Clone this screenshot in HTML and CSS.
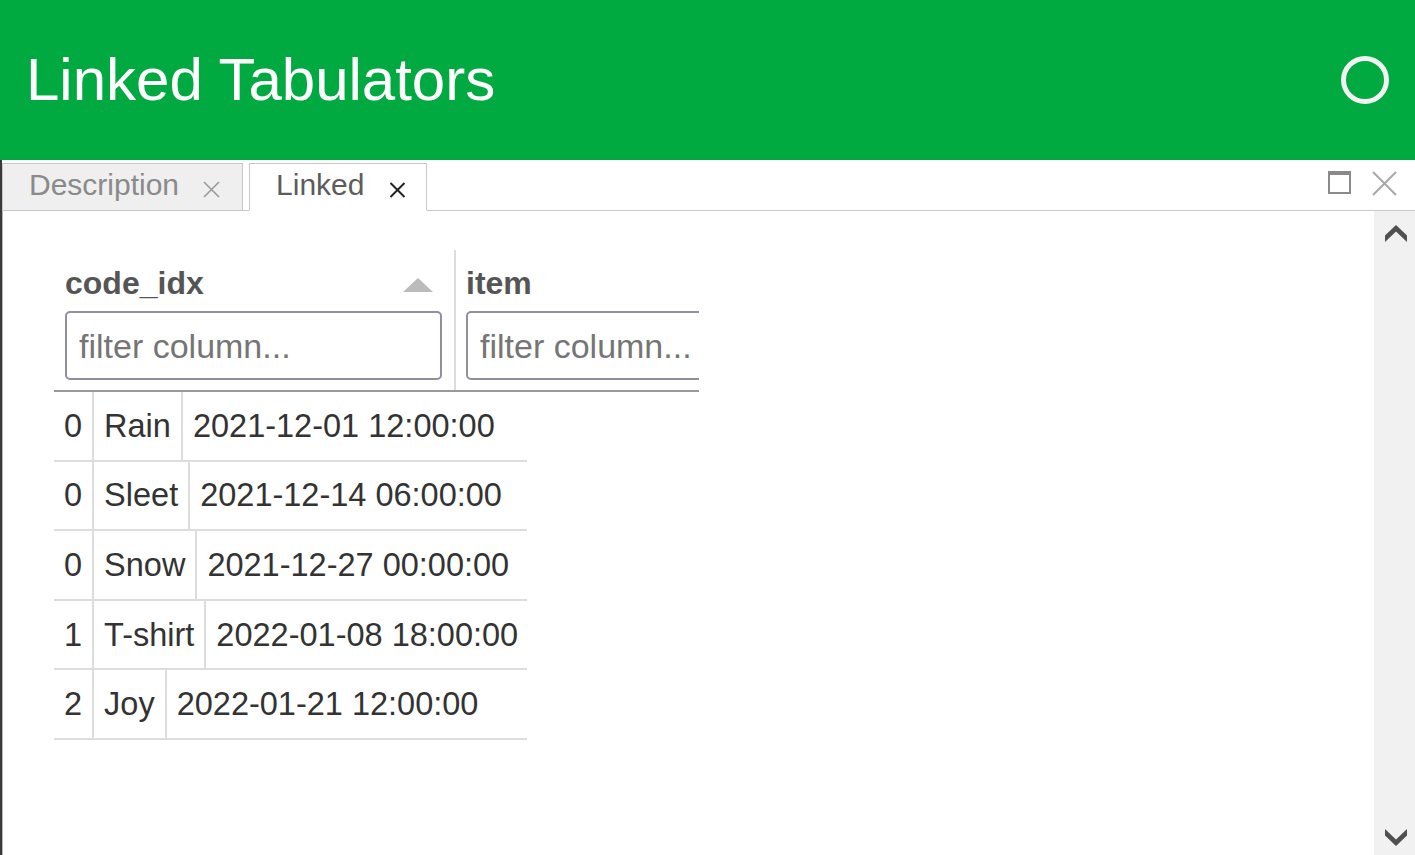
FILE: index.html
```html
<!DOCTYPE html>
<html lang="en">
<head>
<meta charset="utf-8">
<title>Linked Tabulators</title>
<link rel="stylesheet" href="styles.css">
</head>
<body>
<header class="topbar">
  <h1 class="title">Linked Tabulators</h1>
  <svg class="busy" width="50" height="50" viewBox="0 0 50 50"><circle cx="25" cy="25" r="21.5" fill="none" stroke="#f2f2f2" stroke-width="5"/></svg>
</header>
<div class="main">
  <div class="tabs-bar">
    <div class="tab">
      <span class="tab-label">Description</span>
      <svg class="tab-close" width="17" height="17" viewBox="0 0 17 17"><path d="M1 1L16 16M16 1L1 16" stroke="#9a9a9a" stroke-width="1.6"/></svg>
    </div>
    <div class="tab active">
      <span class="tab-label">Linked</span>
      <svg class="tab-close dark" width="17" height="16" viewBox="0 0 17 16"><path d="M1.5 1L15.5 15M15.5 1L1.5 15" stroke="#222" stroke-width="2"/></svg>
    </div>
    <div class="win-icons">
      <span class="maxi"></span>
      <svg class="win-close" width="25" height="25" viewBox="0 0 25 25"><path d="M1 1L24 24M24 1L1 24" stroke="#a8a8a8" stroke-width="2"/></svg>
    </div>
  </div>
  <div class="panel">
    <div class="content">
      <div class="table">
        <div class="thead">
          <div class="col first">
            <div class="col-title-row">
              <span class="col-title">code_idx</span>
              <span class="sort-arrow"></span>
            </div>
            <input class="filter" type="text" placeholder="filter column...">
          </div>
          <div class="col">
            <div class="col-title-row">
              <span class="col-title">item</span>
            </div>
            <input class="filter" type="text" placeholder="filter column...">
          </div>
        </div>
        <div class="tbody">
          <div class="row"><div class="cell">0</div><div class="cell">Rain</div><div class="cell last">2021-12-01 12:00:00</div></div>
          <div class="row"><div class="cell">0</div><div class="cell">Sleet</div><div class="cell last">2021-12-14 06:00:00</div></div>
          <div class="row"><div class="cell">0</div><div class="cell">Snow</div><div class="cell last">2021-12-27 00:00:00</div></div>
          <div class="row"><div class="cell">1</div><div class="cell">T-shirt</div><div class="cell last">2022-01-08 18:00:00</div></div>
          <div class="row"><div class="cell">2</div><div class="cell">Joy</div><div class="cell last">2022-01-21 12:00:00</div></div>
        </div>
      </div>
    </div>
    <div class="scrollbar">
      <svg width="22" height="17" viewBox="0 0 22 17"><polygon points="11,0 22,10.5 22,17 11,6.5 0,17 0,10.5" fill="#505050"/></svg>
      <svg width="22" height="17" viewBox="0 0 22 17"><polygon points="0,0 11,10.5 22,0 22,6.5 11,17 0,6.5" fill="#505050"/></svg>
    </div>
  </div>
</div>
</body>
</html>
```

FILE: styles.css
```css
* { box-sizing: border-box; }
html, body {
  margin: 0;
  padding: 0;
  width: 1415px;
  height: 855px;
  overflow: hidden;
  background: #fff;
  font-family: "Liberation Sans", Arial, sans-serif;
}
.topbar {
  height: 160px;
  background: #00aa41;
  display: flex;
  align-items: center;
  justify-content: space-between;
  padding: 0 25px 0 26px;
}
.title {
  margin: 0;
  color: #fff;
  font-weight: normal;
  font-size: 60px;
  line-height: 1;
}
.busy { display: block; }
.main {
  height: 695px;
  display: flex;
  flex-direction: column;
  border-left: 2px solid #3a3a3a;
}
.tabs-bar {
  height: 51px;
  display: flex;
  align-items: flex-end;
  border-bottom: 1px solid #c8c8c8;
  gap: 6px;
}
.tab {
  height: 48px;
  margin-bottom: -1px;
  display: flex;
  align-items: center;
  background: #efefef;
  border: 1px solid #c8c8c8;
  padding: 0 22px 5px 26px;
  font-size: 30px;
  color: #8a8a8a;
}
.tab.active {
  background: #fff;
  border-bottom-color: #fff;
  color: #5c5c5c;
  padding-right: 20px;
}
.tab-label { line-height: 1; }
.tab-close { margin-left: 24px; margin-top: 9px; display: block; }
.tab-close.dark { margin-left: 25px; margin-top: 11px; }
.win-icons {
  margin-left: auto;
  align-self: flex-start;
  margin-top: 11px;
  margin-right: 18px;
  display: flex;
  align-items: flex-start;
  gap: 21px;
}
.maxi {
  display: block;
  width: 23px;
  height: 23px;
  border: 2px solid #8a8a8a;
  border-top-width: 4px;
}
.win-close { display: block; }
.panel {
  flex: 1;
  display: flex;
  min-height: 0;
  border-left: 1px solid #b8b8b8;
}
.content {
  flex: 1;
  padding: 39px 0 0 51px;
}
.scrollbar {
  width: 41px;
  background: #f1f1f1;
  display: flex;
  flex-direction: column;
  justify-content: space-between;
  align-items: center;
  padding: 14px 0 9px 2px;
}
.scrollbar svg { display: block; }
.table {
  width: 645px;
  overflow: hidden;
}
.thead {
  display: flex;
  border-bottom: 2px solid #999;
  width: max-content;
}
.col {
  width: 402px;
  flex: none;
  padding: 14px 12px 10px 11px;
  border-right: 2px solid #ddd;
}
.col:not(.first) { padding-left: 10px; }
.col-title-row {
  height: 37px;
  margin-bottom: 10px;
  display: flex;
  align-items: center;
  justify-content: space-between;
}
.col-title {
  font-weight: bold;
  font-size: 32px;
  line-height: 37px;
  color: #555;
  position: relative;
  top: 1px;
}
.sort-arrow {
  width: 0;
  height: 0;
  border-left: 15px solid transparent;
  border-right: 15px solid transparent;
  border-bottom: 14px solid #bbb;
  margin-right: 9px;
  margin-top: 4px;
}
.filter {
  display: block;
  width: 100%;
  height: 69px;
  border: 2px solid #8f8f9d;
  border-radius: 5px;
  padding: 2px 12px 0 12px;
  font-family: "Liberation Sans", Arial, sans-serif;
  font-size: 34px;
  color: #333;
  background: #fff;
  outline: none;
}
.filter::placeholder { color: #757575; }
.tbody { width: 473px; }
.row {
  display: flex;
  height: 69.6px;
  border-bottom: 2px solid #ddd;
}
.cell {
  display: flex;
  align-items: center;
  padding: 1px 10px 0 10px;
  border-right: 2px solid #ddd;
  font-size: 32.5px;
  color: #333;
  white-space: nowrap;
}
.cell.last {
  flex: 1;
  border-right: none;
}
```
